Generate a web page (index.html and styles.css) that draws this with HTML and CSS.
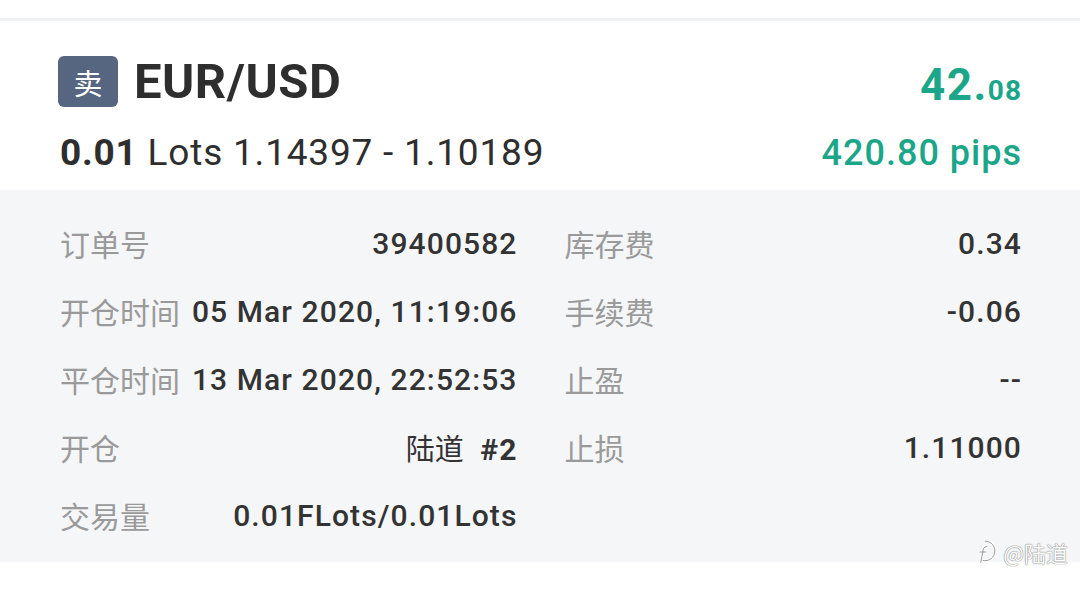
FILE: index.html
```html
<!DOCTYPE html>
<html lang="zh-CN">
<head>
<meta charset="UTF-8">
<title>订单详情</title>
<link rel="stylesheet" href="styles.css">
</head>
<body>
<div class="page">
  <div class="topbar"></div>

  <div class="head">
    <div class="head-row first">
      <div class="pair">
        <span class="badge">卖</span>
        <span class="symbol">EUR/USD</span>
      </div>
      <div class="profit">42.<small>08</small></div>
    </div>
    <div class="head-row second">
      <div class="lots"><b>0.01</b> Lots 1.14397 - 1.10189</div>
      <div class="pips">420.80 pips</div>
    </div>
  </div>

  <div class="detail">
    <div class="item"><span class="label">订单号</span><span class="value">39400582</span></div>
    <div class="item"><span class="label">库存费</span><span class="value">0.34</span></div>
    <div class="item"><span class="label">开仓时间</span><span class="value">05 Mar 2020, 11:19:06</span></div>
    <div class="item"><span class="label">手续费</span><span class="value">-0.06</span></div>
    <div class="item"><span class="label">平仓时间</span><span class="value">13 Mar 2020, 22:52:53</span></div>
    <div class="item"><span class="label">止盈</span><span class="value">--</span></div>
    <div class="item"><span class="label">开仓</span><span class="value"><span class="cn">陆道</span> <b>#2</b></span></div>
    <div class="item"><span class="label">止损</span><span class="value">1.11000</span></div>
    <div class="item"><span class="label">交易量</span><span class="value">0.01FLots/0.01Lots</span></div>
  </div>

  <div class="mark">
    <svg width="24" height="26" viewBox="0 0 22 24">
      <path d="M11 2a9 9 0 1 1-4 17" fill="none" stroke="#fff" stroke-width="2.6"/>
      <path d="M11 2a9 9 0 1 1-4 17" fill="none" stroke="#888" stroke-width="0.8"/>
      <path d="M13 7c-3 0-4 2-4 5l-2 10M6 12h6" fill="none" stroke="#fff" stroke-width="2.6"/>
      <path d="M13 7c-3 0-4 2-4 5l-2 10M6 12h6" fill="none" stroke="#888" stroke-width="0.8"/>
    </svg>
    <span>@陆道</span>
  </div>
</div>
</body>
</html>
```

FILE: styles.css
```css
body { margin: 0; background: #fff; font-family: Roboto, "Noto Sans CJK SC", sans-serif; color: #2e2e2e; }
.page { position: relative; width: 1080px; height: 590px; overflow: hidden; }

.topbar { height: 18px; border-bottom: 3px solid #f1f2f4; }

.head { height: 169px; padding: 35px 58px 0 58px; box-sizing: border-box; }
.head-row { display: flex; justify-content: space-between; align-items: center; }
.head-row.first { height: 51px; }
.head-row.second { margin-top: 24px; height: 44px; }
.pair { display: flex; align-items: center; }
.badge {
  width: 60px; height: 51px; border-radius: 6px;
  background: #566580; color: #fff;
  display: flex; align-items: center; justify-content: center;
  font-family: "Noto Sans CJK SC", sans-serif; font-size: 29px;
}
.symbol { margin-left: 16px; font-size: 49px; font-weight: 700; letter-spacing: 0.5px; line-height: 51px; }
.profit { align-self: flex-end; margin-bottom: -6px; color: #1ba689; font-size: 44px; font-weight: 700; line-height: 44px; letter-spacing: 1.5px; }
.profit small { font-size: 28px; letter-spacing: 1px; }
.lots { font-size: 37px; line-height: 44px; letter-spacing: 0.8px; margin-left: 2px; }
.lots b { font-weight: 700; }
.pips { color: #1ba689; font-size: 36px; font-weight: 500; line-height: 44px; letter-spacing: 1px; }

.detail {
  background: #f5f6f8;
  height: 372px; box-sizing: border-box;
  padding: 19px 58px 0 60px;
  display: grid; grid-template-columns: 1fr 1fr; column-gap: 47px;
  grid-auto-rows: 68px;
}
.item { display: flex; justify-content: space-between; align-items: center; }
.label { color: #9a9a9a; font-family: "Noto Sans CJK SC", sans-serif; font-size: 30px; }
.value { color: #333; font-size: 30px; font-weight: 500; letter-spacing: 1.1px; }
.value .cn { font-family: "Noto Sans CJK SC", sans-serif; font-weight: 400; font-size: 29px; letter-spacing: 0; }
.value b { font-weight: 700; margin-left: 8px; }

.mark {
  position: absolute; right: 12px; top: 536px;
  display: flex; align-items: center; gap: 6px;
  font-family: "Noto Sans CJK SC", sans-serif; font-size: 22px; color: #fff;
  text-shadow: 0 0 1px #777, 0 0 1px #777;
}
```
